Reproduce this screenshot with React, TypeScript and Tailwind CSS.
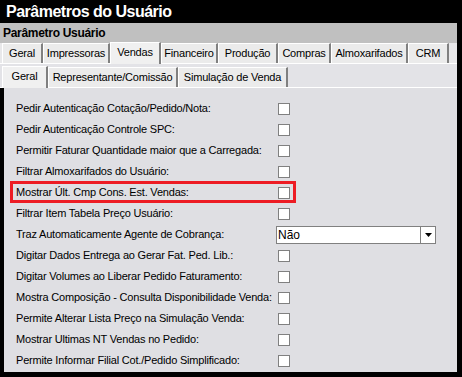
const topTabs = [
  { label: 'Geral', w: 41 },
  { label: 'Impressoras', w: 67 },
  { label: 'Vendas', w: 51, active: true },
  { label: 'Financeiro', w: 57 },
  { label: 'Produção', w: 60 },
  { label: 'Compras', w: 53 },
  { label: 'Almoxarifados', w: 77 },
  { label: 'CRM', w: 41 },
]

const subTabs = [
  { label: 'Geral', w: 46, active: true },
  { label: 'Representante/Comissão', w: 130 },
  { label: 'Simulação de Venda', w: 110 },
]

const rows: { label: string; combo?: boolean; marked?: boolean }[] = [
  { label: 'Pedir Autenticação Cotação/Pedido/Nota:' },
  { label: 'Pedir Autenticação Controle SPC:' },
  { label: 'Permitir Faturar Quantidade maior que a Carregada:' },
  { label: 'Filtrar Almoxarifados do Usuário:' },
  { label: 'Mostrar Últ. Cmp Cons. Est. Vendas:', marked: true },
  { label: 'Filtrar Item Tabela Preço Usuário:' },
  { label: 'Traz Automaticamente Agente de Cobrança:', combo: true },
  { label: 'Digitar Dados Entrega ao Gerar Fat. Ped. Lib.:' },
  { label: 'Digitar Volumes ao Liberar Pedido Faturamento:' },
  { label: 'Mostra Composição - Consulta Disponibilidade Venda:' },
  { label: 'Permite Alterar Lista Preço na Simulação Venda:' },
  { label: 'Mostrar Ultimas NT Vendas no Pedido:' },
  { label: 'Permite Informar Filial Cot./Pedido Simplificado:' },
]

function Tab({ label, w, active }: { label: string; w: number; active?: boolean }) {
  return (
    <div
      style={{ width: w }}
      className={`flex items-center justify-center border-l border-t border-white border-r-2 border-r-[#808080] tracking-[-0.2px] ${
        active ? 'h-[22px] bg-[#f0f0f0] -mb-px relative z-10' : 'h-[20px] bg-[#ebebeb]'
      }`}
    >
      <span className={active ? '-mt-[2px]' : ''}>{label}</span>
    </div>
  )
}

export default function App() {
  return (
    <div className="flex h-[377px] w-[462px] flex-col bg-black text-[11px] text-black font-['Liberation_Sans',Arial,sans-serif]">
      <div className="flex h-[23px] items-center pl-[6px] text-[16px] font-bold tracking-[-0.5px] text-white">
        Parâmetros do Usuário
      </div>
      <div className="mr-[5px] mb-[5px] flex flex-1 flex-col">
        <div className="flex h-[20px] items-center bg-[#c0c0c0] pl-[3px] text-[12px] font-bold tracking-[-0.3px]">
          Parâmetro Usuário
        </div>

        <div className="flex h-[21px] items-end border-b border-white bg-[#e8e8ea] pl-[2px]">
          {topTabs.map((t) => (
            <Tab key={t.label} {...t} />
          ))}
        </div>

        <div className="flex h-[24px] items-end border-b border-white bg-[#e3e3e7] pl-[2px]">
          {subTabs.map((t) => (
            <Tab key={t.label} {...t} />
          ))}
        </div>

        <div className="ml-[4px] flex-1 bg-[#dfdfe3] pt-[10px]">
          {rows.map((r) => (
            <div key={r.label} className="relative flex h-[21px] items-center pl-[12px]">
              {r.marked && (
                <div className="absolute left-[6px] top-[-1px] h-[22px] w-[286px] border-[3px] border-[#ed1c24]" />
              )}
              <div className="w-[262px] whitespace-nowrap tracking-[-0.2px]">{r.label}</div>
              {r.combo ? (
                <div className="ml-[-2px] flex h-[18px] w-[160px] border border-[#808080] bg-white">
                  <div className="flex flex-1 items-center pl-[1px] text-[12px]">Não</div>
                  <div className="flex w-[15px] items-center justify-center border-l border-[#808080]">
                    <svg width="7" height="4" viewBox="0 0 7 4">
                      <path d="M0 0 H7 L3.5 4 Z" fill="#000" />
                    </svg>
                  </div>
                </div>
              ) : (
                <div className="h-[12px] w-[12px] border border-[#808080] bg-white" />
              )}
            </div>
          ))}
        </div>
      </div>
    </div>
  )
}
